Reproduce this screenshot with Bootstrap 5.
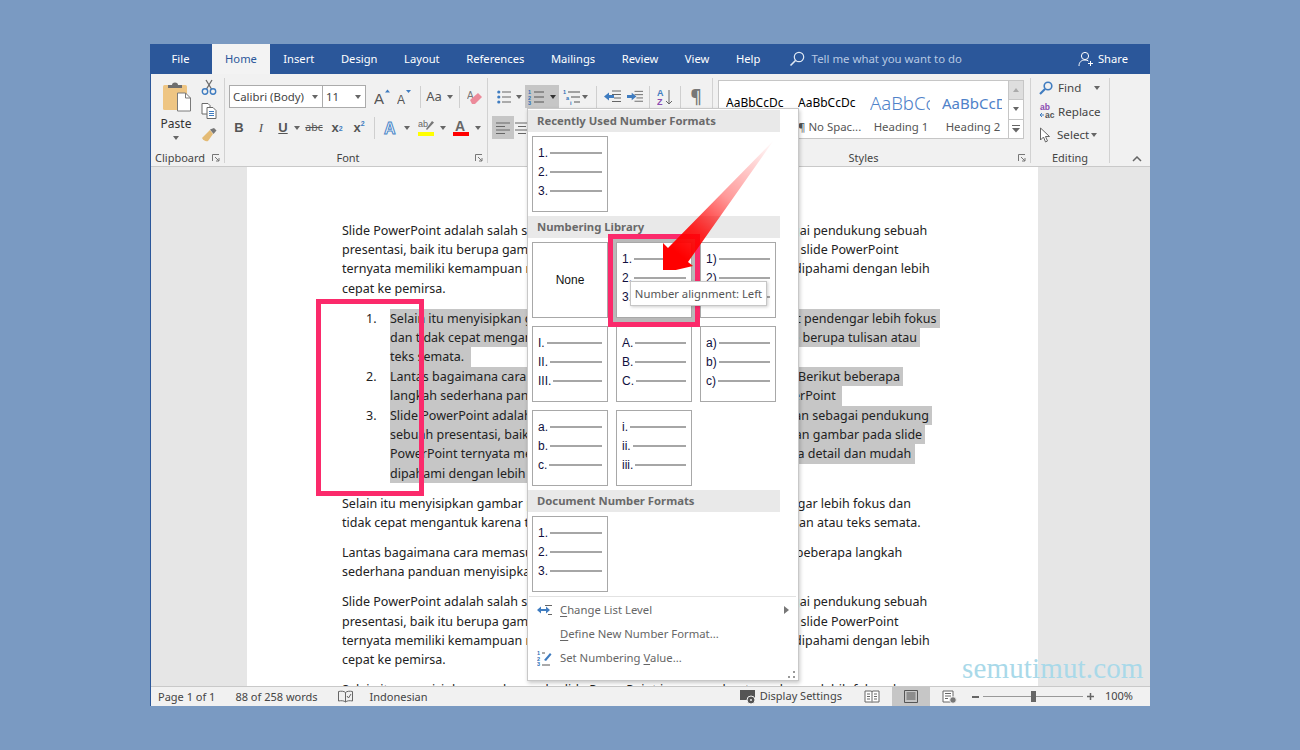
<!DOCTYPE html>
<html lang="id">
<head>
<meta charset="utf-8">
<title>Word</title>
<link href="https://cdn.jsdelivr.net/npm/bootstrap@5.3.0/dist/css/bootstrap.min.css" rel="stylesheet">
<style>
html,body{height:100%}
body{background:#7a9ac2;font-family:"Noto Sans",sans-serif;overflow:hidden;color:#444}
.win{width:1000px;height:662px;margin:44px 0 0 150px;border-left:1px solid #2b579a;position:relative;background:#f1f1f1}
.tabbar{height:30px;background:#2b579a;color:#fff;font-size:11.2px;flex:none}
.tabi{padding:0 13.3px;line-height:30px;white-space:nowrap}
.tabfile{width:59px;text-align:center;padding:0;margin-right:2px}
.tabhome{width:58px;text-align:center;padding:0;background:#f3f3f3;color:#2b579a}
.tell{color:#b8c9e3;margin-left:15px;gap:7px;font-size:11.4px}
.share{margin-left:auto;margin-right:22px;gap:4px}
.ribbon{height:93px;flex:none;background:#f1f1f1;border-bottom:1px solid #c9c9c9;position:relative;font-size:11.4px}
.rg{height:85px;margin-top:4px;border-right:1px solid #d2d2d2;flex:none}
.rgb{flex:1;min-height:0;padding-top:7px}
.rgb0{padding-top:0}
.rl{height:16px;line-height:22px;font-size:11px;color:#444;white-space:nowrap;position:relative;text-align:center}
.rlc{padding-right:16px}
.launch{position:absolute;right:4px;top:7px;display:block}
.g1{width:74px}.g2{width:263px}.g3{width:225px}.g4{width:318px}.g5{width:79px;border-right:1px solid #d2d2d2}
.rr{height:23px;align-items:center;display:flex}
.rr+.rr{margin-top:8px}
.cb{height:23px;background:#fff;border:1px solid #ababab;font-size:11.4px;color:#444;display:flex;align-items:center;justify-content:space-between;padding:0 4px 0 3px;margin-right:-1px;flex:none}
.cb1{width:94px;margin-left:4px}.cb2{width:44px}
.tc{display:inline-flex;align-items:center;justify-content:center;height:23px;flex:none}
.w22{width:22px}.w16{width:16px}.w14{width:14px}.w24{width:24px}.w11{width:11px}.w20{width:20px}.w26{width:26px}.w30{width:30px}
.crt{display:inline-block;width:0;height:0;border-left:3.5px solid transparent;border-right:3.5px solid transparent;border-top:4px solid #666;flex:none}
.crtd{border-top-color:#333}
.crtu{transform:rotate(180deg);border-top-color:#aaa}
.vsep{width:1px;height:22px;background:#cfcfcf;flex:none}
.fb{font-family:"Liberation Sans",sans-serif;font-weight:700;font-size:13px;color:#555}
.fi{font-family:"Liberation Serif",serif;font-weight:400;font-style:italic}
.fabc{font-size:10.5px;color:#555;text-decoration:line-through}
.faa{font-size:13px;color:#555}
.fp{font-size:17px;font-weight:700;color:#777}
.fb sub,.fb sup{font-size:7px;color:#3f7cc0}
.on{background:#c6c6c6}
.big{width:50px}
.pastebtn{font-size:12px;color:#333;text-align:center}
.picon{margin:-3px 0 0 1px}
.plab{line-height:14px;margin-top:5px}
.pcar{margin-top:5px}
.smallcol{margin-top:-6px}
.ml1{margin-left:1px}.ml3{margin-left:3px}.ml6{margin-left:6px}.ml7{margin-left:7px}.mln1{margin-left:-1px}.mln3{margin-left:-3px}
.numbtn{width:34px;height:23px;gap:4px;flex:none}
.mltbtn{width:27px;height:23px;gap:1px;flex:none}
.gal{width:291px;height:59px;background:#fff;border:1px solid #c6c6c6;margin:2px 0 0 5px;flex:none;padding:0 0 0 4px}
.gi{width:72px;flex:none;overflow:hidden;padding:0 7px 0 3px;text-align:left}
.gs{height:42px;line-height:44px;white-space:nowrap;overflow:hidden;color:#000;font-size:12px;width:60px}
.gh1{font-size:18.5px;color:#4f82c9;font-weight:300}
.gh2{font-size:15px;color:#4f82c9}
.gn{font-size:11.4px;color:#555;white-space:nowrap;line-height:14px;margin-top:-3px;text-align:center}
.gsc{width:15px;margin:2px 0 0 0;height:59px;flex:none}
.gsb{flex:1;border:1px solid #c6c6c6;border-left:0;background:#fff;display:flex;align-items:center;justify-content:center;margin-top:-1px}
.gsb:first-child{background:#dedede;margin-top:0}
.edit{margin-top:-2px}
.er{height:23.5px;display:flex;align-items:center;font-size:11.6px;color:#444;gap:5px;padding-left:8px}
.er3{gap:3px}
.doc{flex:1;min-height:0;overflow:hidden;background:#e6e6e6;font-family:"Noto Sans",sans-serif;color:#222}
.pg{width:791px;margin-left:96px;background:#fff;min-height:100%;padding:53.6px 0 0 95px;font-size:12.5px;line-height:19.4px;white-space:nowrap}
.pr{margin-bottom:10.5px}
.dl{height:19.4px}
.li{display:flex}
.lin{width:48px;flex:none;padding-left:24px}
.sel{background:#c6c6c6;display:inline-block;height:19.4px}
.stb{height:20px;flex:none;background:#f1f1f1;border-top:1px solid #c9c9c9;font-size:11px;color:#444;position:relative;z-index:1}
.menu{position:absolute;left:376px;top:64px;width:272px;height:573px;background:#fff;border:1px solid #c8c8c8;box-shadow:1px 2px 4px rgba(0,0,0,.22);padding:1px 0 0 0;font-size:12px;z-index:2}
.mh{width:252px;height:22px;background:#e9e9e9;color:#6a6a6a;font-weight:700;font-size:11.3px;line-height:22px;padding-left:9px}
.mgr{display:grid;grid-template-columns:repeat(3,76px);gap:8px;padding:4px 0 4px 4px}
.nb{height:76px;border:1px solid #a8a8a8;padding:6.5px 5px 0 5px;font-family:"Liberation Sans",sans-serif;font-size:12px;color:#101040;background:#fff}
.nr{height:19px;display:flex;align-items:center;white-space:nowrap}
.nr i{display:block;flex:1;height:2px;background:#a6a6a6;margin-left:2px}
.nn{display:flex;align-items:center;justify-content:center;font-size:12px;color:#111;padding:0;margin-left:0}
.nsel{outline:4px solid #b9b9b9}
.msp{height:1px;background:#e2e2e2;margin:0 2px 1px 1px}
.mi{height:24px;display:flex;align-items:center;color:#666;font-size:11.3px;position:relative}
.mi u{text-underline-offset:2px}
.mic{width:32px;flex:none;display:flex;justify-content:center}
.marw{margin-left:auto;margin-right:9px;width:0;height:0;border-top:4px solid transparent;border-bottom:4px solid transparent;border-left:5px solid #777}
.grip{position:absolute;right:3px;bottom:2px}
.pink1{position:absolute;left:165px;top:255px;width:108px;height:197px;border:5px solid #fb2a6b;z-index:3}
.pink2{position:absolute;left:457px;top:190px;width:92px;height:93px;border:5px solid #fb2a6b;z-index:3}
.tip{position:absolute;left:479px;top:237px;width:137px;height:25px;background:#fff;border:1px solid #c6c6c6;box-shadow:1px 1px 3px rgba(0,0,0,.2);font-size:11.3px;line-height:23px;text-align:center;color:#555;z-index:4;white-space:nowrap}
.arw{position:absolute;left:499px;top:86px;z-index:5}
.wm{position:absolute;left:811px;top:604px;font-family:"Liberation Serif",serif;font-size:29px;line-height:40px;color:#a9d9e9;letter-spacing:.15px;z-index:1;white-space:nowrap}
.stl{padding-left:7px;gap:20px;line-height:20px}
.stl2{margin-left:-3px}
.str{margin-left:auto;gap:0}
.ric{margin:0 12px 0 22px}
.pl{width:38px;height:19px;background:#c6c6c6;display:flex;align-items:center;justify-content:center}
.wic{margin:0 15px 0 12.5px}
.zmin{width:7px;height:2px;background:#666;display:block}
.sld{width:100px;height:1px;background:#999;position:relative;margin:0 4px 0 3.5px}
.knob{position:absolute;left:48px;top:-5px;width:5px;height:11px;background:#666}
.zpct{margin:0 17px 0 11px}
</style>
</head>
<body>
<div class="win d-flex flex-column">
  <div class="tabbar d-flex align-items-center">
    <div class="tabi tabfile">File</div>
    <div class="tabi tabhome">Home</div>
    <div class="tabi">Insert</div><div class="tabi">Design</div><div class="tabi">Layout</div><div class="tabi">References</div><div class="tabi">Mailings</div><div class="tabi">Review</div><div class="tabi">View</div><div class="tabi">Help</div>
    <div class="d-flex align-items-center tell">
      <svg width="16" height="16" viewBox="0 0 16 16" fill="none" stroke="#dfe8f4" stroke-width="1.2"><circle cx="10" cy="6" r="4.7"/><path d="M6.5 9.5 1.500 14.500" stroke-width="1.6"/></svg>
      <span>Tell me what you want to do</span>
    </div>
    <div class="d-flex align-items-center share">
      <svg width="16" height="16" viewBox="0 0 16 16" fill="none" stroke="#fff" stroke-width="1"><circle cx="7" cy="5" r="3.6"/><path d="M1 15c0-4 2.500-6 6-6 1.500 0 2.500.3 3.400 1M12.500 10v5M10 12.500h5"/></svg>
      <span>Share</span>
    </div>
  </div>

  <div class="ribbon d-flex">
    <div class="rg g1 d-flex flex-column">
      <div class="rgb d-flex">
        <div class="big d-flex flex-column align-items-center pastebtn">
          <svg class="picon" width="30" height="30" viewBox="0 0 30 30"><rect x="1" y="3" width="24" height="25" rx="1.500" fill="#eec583"/><path d="M6 6V3h4c0-1.500 1-2.500 3-2.500S16 1.500 16 3h4v3z" fill="#6e6e6e"/><path d="M15.500 11h8l5 5v13h-13z" fill="#fff" stroke="#7a7a7a"/><path d="M23.500 11v5h5" fill="none" stroke="#7a7a7a"/></svg>
          <span class="plab">Paste</span>
          <span class="crt pcar"></span>
        </div>
        <div class="d-flex flex-column align-items-center smallcol">
          <svg width="16" height="16" viewBox="0 0 16 16" fill="none"><path d="M5 1l5.500 9M11 1 5.500 10" stroke="#6b6b6b" stroke-width="1.300"/><circle cx="4" cy="12.500" r="2.700" stroke="#3f7cc0" stroke-width="1.400"/><circle cx="12" cy="12.500" r="2.700" stroke="#3f7cc0" stroke-width="1.400"/></svg>
          <svg class="mt-2" width="16" height="16" viewBox="0 0 16 16" fill="#fff" stroke="#6a6a6a"><path d="M1 .5h6l2 2V11H1z"/><path d="M6 4.500h6l3 3v8H6z"/><path d="M8 8.500h5M8 10.500h5M8 12.500h5" stroke="#3f7cc0"/></svg>
          <svg class="mt-2" width="16" height="15" viewBox="0 0 16 15"><path d="M9 3l3 4-5 7c-2 1-5-1-6-3z" fill="#e4bb75"/><path d="M9 2.500 12.500 7l3-3.500L13 1z" fill="#777"/></svg>
        </div>
      </div>
      <div class="rl text-start ps-1">Clipboard<svg class="launch" width="8" height="8" viewBox="0 0 8 8" fill="none" stroke="#777"><path d="M.5 7V.5H7M3 3l4 4M7 4v3H4"/></svg></div>
    </div>

    <div class="rg g2 d-flex flex-column">
      <div class="rgb">
        <div class="rr">
          <div class="cb cb1"><span>Calibri (Body)</span><span class="crt"></span></div>
          <div class="cb cb2"><span>11</span><span class="crt"></span></div>
          <span class="tc w22 ml7"><svg width="18" height="16" viewBox="0 0 18 16"><text x="0" y="15" font-family="Liberation Sans" font-size="15" fill="#555">A</text><path d="M11 3.500 13.500 0.500 16 3.500z" fill="#3f7cc0"/></svg></span>
          <span class="tc w22"><svg width="16" height="16" viewBox="0 0 16 16"><text x="0" y="15" font-family="Liberation Sans" font-size="12" fill="#555">A</text><path d="M9 1h5l-2.500 3z" fill="#3f7cc0"/></svg></span>
          <span class="vsep ms-1"></span>
          <span class="tc w26 faa">Aa</span><span class="crt"></span>
          <span class="vsep ml6"></span>
          <span class="tc w30"><svg width="16" height="16" viewBox="0 0 16 16"><text x="0" y="10" font-family="Liberation Sans" font-size="10" fill="#777">A</text><path d="M3 11l8-7 4 4-7 7H5z" fill="#ec8a9a"/></svg></span>
        </div>
        <div class="rr ps-1">
          <span class="tc w22 fb mln1">B</span>
          <span class="tc w22 fb fi">I</span>
          <span class="tc w16 fb text-decoration-underline ml3">U</span>
          <span class="tc w11"><span class="crt"></span></span>
          <span class="tc w24 fabc">abc</span>
          <span class="tc w22 fb">x<sub>2</sub></span>
          <span class="tc w22 fb">x<sup>2</sup></span>
          <span class="vsep ms-1"></span>
          <span class="tc w22 ms-1"><svg width="16" height="17" viewBox="0 0 16 17"><text x="2" y="15" font-family="Liberation Sans" font-weight="700" font-size="16" fill="#fff" stroke="#4a86c8" stroke-width="1">A</text></svg></span>
          <span class="tc w11 me-1"><span class="crt"></span></span>
          <span class="tc w20"><svg width="16" height="17" viewBox="0 0 16 17"><text x="0" y="8" font-family="Liberation Sans" font-size="9" fill="#666">ab</text><path d="M8 10l6-8 2 1.500L9 11z" fill="#777"/><rect y="13" width="16" height="4" fill="#ff0"/></svg></span>
          <span class="tc w14"><span class="crt"></span></span>
          <span class="tc w22"><svg width="16" height="17" viewBox="0 0 16 17"><text x="2" y="12" font-family="Liberation Sans" font-weight="700" font-size="14" fill="#666">A</text><rect y="13" width="16" height="4" fill="#f00"/></svg></span>
          <span class="tc w11"><span class="crt"></span></span>
        </div>
      </div>
      <div class="rl rlc">Font<svg class="launch" width="8" height="8" viewBox="0 0 8 8" fill="none" stroke="#777"><path d="M.5 7V.5H7M3 3l4 4M7 4v3H4"/></svg></div>
    </div>

    <div class="rg g3 d-flex flex-column">
      <div class="rgb">
        <div class="rr">
          <span class="tc w26 ml3"><svg width="14" height="16" viewBox="0 0 14 16"><path d="M5 3h9M5 8h9M5 13h9" stroke="#666" stroke-width="1.100"/><circle cx="1.800" cy="3" r="1.600" fill="#3f7cc0"/><circle cx="1.800" cy="8" r="1.600" fill="#3f7cc0"/><circle cx="1.800" cy="13" r="1.600" fill="#3f7cc0"/></svg></span>
          <span class="crt mln1"></span>
          <span class="d-inline-flex align-items-center on justify-content-center numbtn ml3">
            <svg width="18" height="16" viewBox="0 0 18 16"><text x="0" y="5" font-size="5.500" font-weight="700" fill="#2f6fb5" font-family="Liberation Sans">1</text><text x="0" y="10.500" font-size="5.500" font-weight="700" fill="#2f6fb5" font-family="Liberation Sans">2</text><text x="0" y="16" font-size="5.500" font-weight="700" fill="#2f6fb5" font-family="Liberation Sans">3</text><path d="M6 3h10M6 8h10M6 13h10" stroke="#555" stroke-width="1.100"/></svg><span class="crt crtd"></span>
          </span>
          <span class="d-inline-flex align-items-center justify-content-center mltbtn ml3">
            <svg width="18" height="16" viewBox="0 0 18 16"><text x="0" y="5" font-size="5.500" font-weight="700" fill="#2f6fb5" font-family="Liberation Sans">1</text><text x="3" y="10.500" font-size="5.500" font-weight="700" fill="#2f6fb5" font-family="Liberation Sans">a</text><text x="7" y="16" font-size="5.500" font-weight="700" fill="#2f6fb5" font-family="Liberation Sans">i</text><path d="M5 3h12M8 8h9M11 13h6" stroke="#555" stroke-width="1.100"/></svg><span class="crt"></span>
          </span>
          <span class="vsep ml7"></span>
          <span class="tc w30"><svg width="17" height="14" viewBox="0 0 17 14"><path d="M8 1h9M8 4.500h9M10 8h7M8 11.500h9" stroke="#666"/><path d="M0 6.500 5 2.500v2.500h5v3H5v2.500z" fill="#3f7cc0"/></svg></span>
          <span class="tc w16"><svg width="17" height="14" viewBox="0 0 17 14"><path d="M8 1h9M8 4.500h9M10 8h7M8 11.500h9" stroke="#666"/><path d="M10 6.500 5 2.500v2.500H0v3h5v2.500z" fill="#3f7cc0"/></svg></span>
          <span class="vsep ml6"></span>
          <span class="tc w30"><svg width="16" height="18" viewBox="0 0 16 18"><text x="0" y="8" font-size="9" font-weight="700" fill="#3f7cc0" font-family="Liberation Sans">A</text><text x="0" y="17" font-size="9" font-weight="700" fill="#8a4bb0" font-family="Liberation Sans">Z</text><path d="M12 2v14M9 13l3 3 3-3" stroke="#666" fill="none"/></svg></span>
          <span class="vsep"></span>
          <span class="tc w30 fp">¶</span>
        </div>
        <div class="rr">
          <span class="tc on w22 ms-1"><svg width="14" height="12" viewBox="0 0 14 12" stroke="#666"><path d="M0 1h14M0 4.500h9M0 8h14M0 11.500h9"/></svg></span>
          <span class="tc w16"><svg width="14" height="12" viewBox="0 0 14 12" stroke="#666"><path d="M0 1h14M3 4.500h8M0 8h14M3 11.500h8"/></svg></span>
        </div>
      </div>
      <div class="rl">Paragraph</div>
    </div>

    <div class="rg g4 d-flex flex-column">
      <div class="rgb rgb0 d-flex">
        <div class="gal d-flex">
          <div class="gi"><div class="gs">AaBbCcDc</div><div class="gn">¶ Normal</div></div>
          <div class="gi"><div class="gs">AaBbCcDc</div><div class="gn">¶ No Spac...</div></div>
          <div class="gi"><div class="gs gh1">AaBbCc</div><div class="gn">Heading 1</div></div>
          <div class="gi"><div class="gs gh2">AaBbCcD</div><div class="gn">Heading 2</div></div>
        </div>
        <div class="gsc d-flex flex-column">
          <div class="gsb"><span class="crt crtu"></span></div>
          <div class="gsb"><span class="crt"></span></div>
          <div class="gsb"><svg width="8" height="8" viewBox="0 0 8 8" fill="#666"><rect y="0" width="8" height="1"/><path d="M0 3h8L4 7.500z"/></svg></div>
        </div>
      </div>
      <div class="rl rlc">Styles<svg class="launch" width="8" height="8" viewBox="0 0 8 8" fill="none" stroke="#777"><path d="M.5 7V.5H7M3 3l4 4M7 4v3H4"/></svg></div>
    </div>

    <div class="rg g5 d-flex flex-column">
      <div class="rgb rgb0 edit">
        <div class="er"><svg width="14" height="14" viewBox="0 0 14 14" fill="none" stroke="#3f7cc0" stroke-width="1.600"><circle cx="9" cy="5" r="3.800"/><path d="M6 8 1 13" stroke-width="2.200"/></svg><span>Find</span><span class="crt ms-2"></span></div>
        <div class="er er3"><svg width="16" height="16" viewBox="0 0 16 16"><text x="1" y="7" font-size="8.500" font-weight="700" fill="#8a4bb0" font-family="Liberation Sans">ab</text><text x="6" y="15" font-size="8.500" font-weight="700" fill="#555" font-family="Liberation Sans">ac</text><path d="M1 12h4M1 12l2-2M1 12l2 2" stroke="#3f7cc0" fill="none"/></svg><span>Replace</span></div>
        <div class="er"><svg width="13" height="16" viewBox="0 0 13 16" fill="#fff" stroke="#666"><path d="M1.500 1v12l3-3 2 5 2-1-2-4.500h4z"/></svg><span>Select</span><span class="crt mln3"></span></div>
      </div>
      <div class="rl">Editing</div>
    </div>
    <div class="flex-grow-1 d-flex justify-content-end align-items-end pe-2 pb-1"><svg width="10" height="6" viewBox="0 0 10 6" fill="none" stroke="#666" stroke-width="1.500"><path d="M1 5l4-4 4 4"/></svg></div>
  </div>

  <div class="doc">
    <div class="pg">
      <div class="pr">
        <div class="dl">Slide PowerPoint adalah salah satu media visual yang sering digunakan sebagai pendukung sebuah</div>
        <div class="dl">presentasi, baik itu berupa gambar, teks, atau video. Penyisipan gambar pada slide PowerPoint</div>
        <div class="dl">ternyata memiliki kemampuan menyampaikan pesan&nbsp;&nbsp;secara detail dan jelas dipahami dengan lebih</div>
        <div class="dl">cepat ke pemirsa.</div>
      </div>
      <div class="pr">
        <div class="li"><span class="lin">1.</span><div>
          <div class="dl"><span class="sel">Selain itu menyisipkan gambar pada slide PowerPoint juga&nbsp;&nbsp;&nbsp;membuat pendengar lebih fokus&nbsp;</span></div>
          <div class="dl"><span class="sel">dan tidak cepat mengantuk karena tidak hanya disuguhi dengan slide berupa tulisan atau&nbsp;</span></div>
          <div class="dl"><span class="sel">teks semata.&nbsp;&nbsp;</span></div>
        </div></div>
        <div class="li"><span class="lin">2.</span><div>
          <div class="dl"><span class="sel">Lantas bagaimana cara memasukkan gambar ke&nbsp;&nbsp;&nbsp;&nbsp;&nbsp;slide PowerPoint? Berikut beberapa&nbsp;</span></div>
          <div class="dl"><span class="sel">langkah sederhana panduan menyisipkan gambar pada&nbsp;&nbsp;&nbsp;&nbsp;&nbsp;&nbsp;slide PowerPoint&nbsp;&nbsp;</span></div>
        </div></div>
        <div class="li"><span class="lin">3.</span><div>
          <div class="dl"><span class="sel">Slide PowerPoint adalah salah satu media visual yang sering digunakan sebagai pendukung&nbsp;</span></div>
          <div class="dl"><span class="sel">sebuah presentasi, baik itu berupa gambar, teks, atau video. Penyisipan gambar pada slide&nbsp;</span></div>
          <div class="dl"><span class="sel">PowerPoint ternyata memiliki kemampuan memberi&nbsp;&nbsp;&nbsp;informasi secara detail dan mudah&nbsp;</span></div>
          <div class="dl"><span class="sel">dipahami dengan lebih cepat ke pemirsa.</span></div>
        </div></div>
      </div>
      <div class="pr">
        <div class="dl">Selain itu menyisipkan gambar pada slide PowerPoint juga&nbsp;&nbsp;membuat pendengar lebih fokus dan</div>
        <div class="dl">tidak cepat mengantuk karena tidak hanya disuguhi dengan&nbsp;slide berupa tulisan atau teks semata.</div>
      </div>
      <div class="pr">
        <div class="dl">Lantas bagaimana cara memasukkan gambar ke&nbsp;&nbsp;&nbsp;&nbsp;&nbsp;slide PowerPoint? Berikut beberapa langkah</div>
        <div class="dl">sederhana panduan menyisipkan gambar pada slide PowerPoint</div>
      </div>
      <div class="pr">
        <div class="dl">Slide PowerPoint adalah salah satu media visual yang sering digunakan sebagai pendukung sebuah</div>
        <div class="dl">presentasi, baik itu berupa gambar, teks, atau video. Penyisipan gambar pada slide PowerPoint</div>
        <div class="dl">ternyata memiliki kemampuan menyampaikan pesan&nbsp;&nbsp;secara detail dan jelas dipahami dengan lebih</div>
        <div class="dl">cepat ke pemirsa.</div>
      </div>
      <div class="dl">Selain itu menyisipkan gambar pada slide PowerPoint juga&nbsp;&nbsp;membuat pendengar lebih fokus dan</div>
    </div>
  </div>

  <div class="stb d-flex align-items-center">
    <div class="d-flex align-items-center stl">
      <span>Page 1 of 1</span><span>88 of 258 words</span>
      <svg width="15" height="13" viewBox="0 0 15 13" fill="none" stroke="#666"><path d="M7.500 2.500C6 1 3 1 .5 1.500V11c2.500-.5 5.500-.5 7 1 1.500-1.500 4.500-1.500 7-1V1.500C12 1 9 1 7.500 2.500zM7.500 2.500V12M9 6l1.500 2L13 4"/></svg>
      <span class="stl2">Indonesian</span>
    </div>
    <div class="d-flex align-items-center str">
      <svg width="16" height="16" viewBox="0 0 16 16"><rect y="1" width="15" height="10" fill="#555"/><circle cx="11" cy="11" r="4" fill="#555" stroke="#f1f1f1"/><circle cx="11" cy="11" r="1" fill="#f1f1f1"/></svg>
      <span class="ms-1">Display Settings</span>
      <svg class="ric" width="16" height="13" viewBox="0 0 16 13" fill="#fff" stroke="#666"><path d="M1 1h6.500l.5 1 .5-1H15v11H8.500L8 12.500 7.500 12H1zM8 2v10M3 4h3M3 6.500h3M3 9h3M10 4h3M10 6.500h3M10 9h3"/></svg>
      <div class="pl"><svg width="14" height="13" viewBox="0 0 14 13" fill="none" stroke="#555"><path d="M.5.5h13v12H.5zM2.500 3h9M2.500 5h9M2.500 7h9M2.500 9h9"/></svg></div>
      <svg class="wic" width="15" height="14" viewBox="0 0 15 14" fill="#fff" stroke="#666"><path d="M1 1h10v11H1zM3 3.500h6M3 6h6M3 8.500h3"/><circle cx="11" cy="10" r="3.300" fill="#777" stroke="#f1f1f1"/></svg>
      <span class="zmin"></span>
      <div class="sld"><div class="knob"></div></div>
      <svg width="7" height="7" viewBox="0 0 7 7" stroke="#666" stroke-width="1.500"><path d="M0 3.500h7M3.500 0v7"/></svg>
      <span class="zpct">100%</span>
    </div>
  </div>

  <div class="menu">
    <div class="mh">Recently Used Number Formats</div>
    <div class="mgr">
      <div class="nb"><div class="nr">1.<i></i></div><div class="nr">2.<i></i></div><div class="nr">3.<i></i></div></div>
    </div>
    <div class="mh">Numbering Library</div>
    <div class="mgr">
      <div class="nb nn">None</div>
      <div class="nb nsel"><div class="nr">1.<i></i></div><div class="nr">2.<i></i></div><div class="nr">3.<i></i></div></div>
      <div class="nb"><div class="nr">1)<i></i></div><div class="nr">2)<i></i></div><div class="nr">3)<i></i></div></div>
      <div class="nb"><div class="nr">I.<i></i></div><div class="nr">II.<i></i></div><div class="nr">III.<i></i></div></div>
      <div class="nb"><div class="nr">A.<i></i></div><div class="nr">B.<i></i></div><div class="nr">C.<i></i></div></div>
      <div class="nb"><div class="nr">a)<i></i></div><div class="nr">b)<i></i></div><div class="nr">c)<i></i></div></div>
      <div class="nb"><div class="nr">a.<i></i></div><div class="nr">b.<i></i></div><div class="nr">c.<i></i></div></div>
      <div class="nb"><div class="nr">i.<i></i></div><div class="nr">ii.<i></i></div><div class="nr">iii.<i></i></div></div>
    </div>
    <div class="mh">Document Number Formats</div>
    <div class="mgr">
      <div class="nb"><div class="nr">1.<i></i></div><div class="nr">2.<i></i></div><div class="nr">3.<i></i></div></div>
    </div>
    <div class="msp"></div>
    <div class="mi"><span class="mic"><svg width="15" height="10" viewBox="0 0 15 10"><path d="M0 5l4-3.500V4h5V1.500L13 5 9 8.500V6H4v2.500z" fill="#3f7cc0"/><path d="M8 .5h7M11 9.500h4" stroke="#666"/></svg></span><span><u>C</u>hange List Level</span><span class="marw"></span></div>
    <div class="mi"><span class="mic"></span><span><u>D</u>efine New Number Format...</span></div>
    <div class="mi"><span class="mic"><svg width="15" height="16" viewBox="0 0 15 16"><text x="0" y="5" font-size="5.500" font-weight="700" fill="#2f6fb5" font-family="Liberation Sans">1</text><text x="0" y="10.500" font-size="5.500" font-weight="700" fill="#2f6fb5" font-family="Liberation Sans">2</text><text x="0" y="16" font-size="5.500" font-weight="700" fill="#2f6fb5" font-family="Liberation Sans">3</text><path d="M5 3h3M5 15h8" stroke="#555"/><path d="M7 10l6-7 1.500 1.500L9 11z" fill="#3f7cc0"/></svg></span><span>Set Numbering <u>V</u>alue...</span></div>
    <svg class="grip" width="7" height="7" viewBox="0 0 7 7" fill="#999"><rect x="5" y="0" width="2" height="2"/><rect x="0" y="5" width="2" height="2"/><rect x="5" y="5" width="2" height="2"/></svg>
  </div>

  <div class="pink1"></div>
  <div class="pink2"></div>
  <div class="tip">Number alignment: Left</div>
  <svg class="arw" width="130" height="140" viewBox="0 0 130 140">
    <defs><linearGradient id="ag" gradientUnits="userSpaceOnUse" x1="124" y1="10" x2="30" y2="125"><stop offset="0" stop-color="#ff0000" stop-opacity="0"/><stop offset=".5" stop-color="#ff0000" stop-opacity=".4"/><stop offset=".8" stop-color="#ff0000" stop-opacity=".85"/><stop offset="1" stop-color="#ff0000"/></linearGradient></defs>
    <polygon points="124,10 38,132 43,136 13,143 13,113 18,118" fill="url(#ag)"/>
  </svg>
  <div class="wm">semutimut.com</div>
</div>
<script src="https://cdn.jsdelivr.net/npm/bootstrap@5.3.0/dist/js/bootstrap.bundle.min.js"></script>
</body>
</html>
